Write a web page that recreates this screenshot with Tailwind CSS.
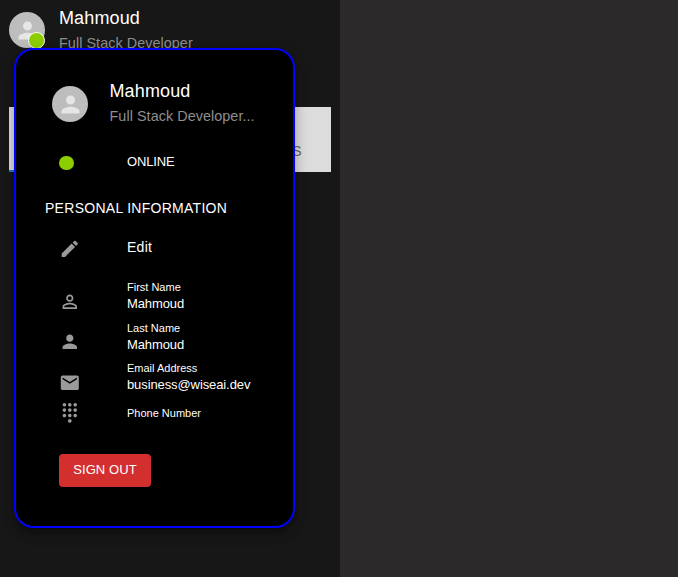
<!DOCTYPE html>
<html lang="en">
<head>
<meta charset="utf-8">
<title>Profile</title>
<script src="https://cdn.jsdelivr.net/npm/@tailwindcss/browser@4"></script>
</head>
<body class="font-['Liberation_Sans',Arial,sans-serif] bg-[#2b2929] text-white">
<div class="relative flex h-[577px] w-[678px] overflow-hidden">
  <aside class="w-[340px] bg-[#171717] pl-[9px] pr-[9px]">
    <header class="flex h-[107px] pt-[5px]">
      <div class="relative mt-[7px] flex size-9 shrink-0 items-center justify-center rounded-full bg-[#bdbdbd]">
        <svg class="size-[27px] fill-[#e6e6e6]" viewBox="0 0 24 24"><path d="M12 12c2.21 0 4-1.79 4-4s-1.79-4-4-4-4 1.79-4 4 1.79 4 4 4zm0 2c-2.67 0-8 1.34-8 4v2h16v-2c0-2.66-5.33-4-8-4z"/></svg>
        <span class="absolute left-[19px] top-5 size-[17px] rounded-full border border-white bg-[#8dce00]"></span>
      </div>
      <div class="ml-[14px]">
        <h2 class="text-[18px] leading-[26px] tracking-[0.13px]">Mahmoud</h2>
        <p class="text-[14.4px] leading-6 tracking-[0.05px] text-[#8f8f8f]">Full Stack Developer</p>
      </div>
    </header>
    <nav class="flex h-[65px] w-[322px] items-end justify-between bg-[#dcdcdc]">
      <span class="h-[2px] w-40 bg-[#1976d2]"></span>
      <span class="mr-[29px] pb-3 text-[14px] leading-[17px] tracking-[0.4px] text-[#666]">CONTACTS</span>
    </nav>
  </aside>

  <section class="absolute left-[14px] top-12 h-[480px] w-[281px] rounded-[20px] border-2 border-[#0000ff] bg-black shadow-[0_5px_5px_-3px_rgba(0,0,0,0.2),0_8px_10px_1px_rgba(0,0,0,0.14),0_3px_14px_2px_rgba(0,0,0,0.12)]">
    <div class="flex h-[95px] pl-9 pt-7">
      <div class="mt-2 flex size-9 items-center justify-center rounded-full bg-[#bdbdbd]">
        <svg class="size-[27px] fill-[#e6e6e6]" viewBox="0 0 24 24"><path d="M12 12c2.21 0 4-1.79 4-4s-1.79-4-4-4-4 1.79-4 4 1.79 4 4 4zm0 2c-2.67 0-8 1.34-8 4v2h16v-2c0-2.66-5.33-4-8-4z"/></svg>
      </div>
      <div class="ml-[21.5px]">
        <h2 class="text-[18px] leading-[26px] tracking-[0.13px]">Mahmoud</h2>
        <p class="text-[14.4px] leading-6 tracking-[0.05px] text-[#8f8f8f]">Full Stack Developer...</p>
      </div>
    </div>
    <div class="flex h-[36px] items-center pl-[43px]">
      <span class="h-[14px] w-[15px] rounded-full bg-[#8dce00]"></span>
      <span class="ml-[53px] pb-[2px] text-[13px] leading-4 tracking-[-0.15px]">ONLINE</span>
    </div>
    <h3 class="mt-4 pl-[29px] text-[14px] leading-[22px] tracking-[0.28px]">PERSONAL INFORMATION</h3>
    <ul class="mt-[19px] pl-[43px]">
      <li class="flex h-[41px]">
        <svg class="size-[21.6px] fill-[#9a9a9a]" viewBox="0 0 24 24"><path d="M3 17.25V21h3.75L17.81 9.94l-3.75-3.75L3 17.25zM20.71 7.04c.39-.39.39-1.02 0-1.41l-2.34-2.34c-.39-.39-1.02-.39-1.41 0l-1.83 1.83 3.75 3.75 1.83-1.83z"/></svg>
        <span class="ml-[46.4px] pt-px text-[14px] leading-4 tracking-[0.3px]">Edit</span>
      </li>
      <li class="flex h-[41px]">
        <svg class="mt-[12px] size-[21.6px] fill-[#9a9a9a]" viewBox="0 0 24 24"><path d="M12 5.9c1.16 0 2.1.94 2.1 2.1s-.94 2.1-2.1 2.1S9.9 9.16 9.9 8s.94-2.1 2.1-2.1m0 9c2.97 0 6.1 1.46 6.1 2.1v1.1H5.9V17c0-.64 3.13-2.1 6.1-2.1M12 4C9.79 4 8 5.79 8 8s1.79 4 4 4 4-1.79 4-4-1.79-4-4-4zm0 9c-2.67 0-8 1.34-8 4v3h16v-3c0-2.66-5.33-4-8-4z"/></svg>
        <div class="ml-[46.4px]"><p class="text-[11px] leading-4">First Name</p><p class="pt-px text-[13px] leading-4 tracking-[-0.1px]">Mahmoud</p></div>
      </li>
      <li class="flex h-[40px]">
        <svg class="mt-[11px] size-[21.6px] fill-[#9a9a9a]" viewBox="0 0 24 24"><path d="M12 12c2.21 0 4-1.79 4-4s-1.79-4-4-4-4 1.79-4 4 1.79 4 4 4zm0 2c-2.67 0-8 1.34-8 4v2h16v-2c0-2.66-5.33-4-8-4z"/></svg>
        <div class="ml-[46.4px]"><p class="text-[11px] leading-4">Last Name</p><p class="pt-px text-[13px] leading-4 tracking-[-0.1px]">Mahmoud</p></div>
      </li>
      <li class="flex h-[45px]">
        <svg class="mt-[12px] size-[21.6px] fill-[#9a9a9a]" viewBox="0 0 24 24"><path d="M20 4H4c-1.1 0-1.99.9-1.99 2L2 18c0 1.1.9 2 2 2h16c1.1 0 2-.9 2-2V6c0-1.1-.9-2-2-2zm0 4-8 5-8-5V6l8 5 8-5v2z"/></svg>
        <div class="ml-[46.4px]"><p class="text-[11px] leading-4">Email Address</p><p class="pt-px text-[13px] leading-4 tracking-[-0.1px]">business@wiseai.dev</p></div>
      </li>
      <li class="flex h-[49px]">
        <svg class="-mt-[3px] size-[21.6px] fill-[#9a9a9a]" viewBox="0 0 24 24"><path d="M12 19c-1.1 0-2 .9-2 2s.9 2 2 2 2-.9 2-2-.9-2-2-2zM6 1c-1.1 0-2 .9-2 2s.9 2 2 2 2-.9 2-2-.9-2-2-2zm0 6c-1.1 0-2 .9-2 2s.9 2 2 2 2-.9 2-2-.9-2-2-2zm0 6c-1.1 0-2 .9-2 2s.9 2 2 2 2-.9 2-2-.9-2-2-2zm12-8c1.1 0 2-.9 2-2s-.9-2-2-2-2 .9-2 2 .9 2 2 2zm-6 8c-1.1 0-2 .9-2 2s.9 2 2 2 2-.9 2-2-.9-2-2-2zm6 0c-1.1 0-2 .9-2 2s.9 2 2 2 2-.9 2-2-.9-2-2-2zm0-6c-1.1 0-2 .9-2 2s.9 2 2 2 2-.9 2-2-.9-2-2-2zm-6 0c-1.1 0-2 .9-2 2s.9 2 2 2 2-.9 2-2-.9-2-2-2zm0-6c-1.1 0-2 .9-2 2s.9 2 2 2 2-.9 2-2-.9-2-2-2z"/></svg>
        <p class="ml-[46.4px] text-[11px] leading-4">Phone Number</p>
      </li>
    </ul>
    <button class="ml-[43px] block h-[33px] w-[92px] rounded bg-[#d32f2f] pb-[2px] text-[13px] tracking-[0.1px]">SIGN OUT</button>
  </section>
</div>
</body>
</html>
